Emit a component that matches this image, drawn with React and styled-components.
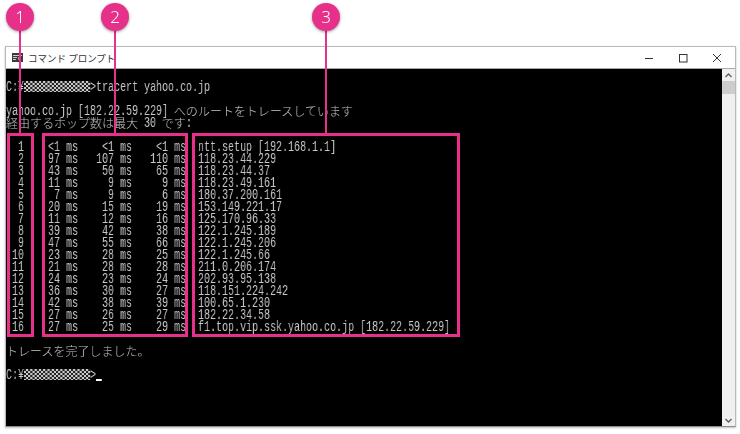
import React from "react";
import styled, { createGlobalStyle } from "styled-components";

const Global = createGlobalStyle`
  html, body { margin: 0; padding: 0; background: #fff; }
  #root { width: 740px; height: 434px; overflow: hidden; }
`;

const Page = styled.div`
  position: relative;
  width: 740px;
  height: 434px;
  padding: 46px 4px 6px 5px;
  box-sizing: border-box;
  background: #fff;
  filter: blur(0.35px);
`;

const Window = styled.div`
  display: flex;
  flex-direction: column;
  height: 381px;
  box-sizing: border-box;
  border: 1px solid #b9b9b9;
  border-bottom: 1px solid #8c8c8c;
  background: #fff;
  box-shadow: 0 1px 2px rgba(0, 0, 0, 0.25);
`;

const TitleBar = styled.div`
  display: flex;
  align-items: center;
  height: 22px;
  flex: none;
  box-sizing: border-box;
  padding-left: 6px;
  border-bottom: 1px solid #a8a8a8;
`;

const TitleText = styled.span`
  margin-left: 5px;
  font: 9.5px/22px "Noto Sans CJK JP", "Noto Sans", sans-serif;
  color: #333;
`;

const Controls = styled.div`
  display: flex;
  margin-left: auto;
  margin-right: 1px;
`;

const ControlButton = styled.span`
  display: flex;
  width: 34px;
  height: 21px;
  align-items: center;
  justify-content: center;
`;

const Body = styled.div`
  flex: 1;
  display: flex;
  min-height: 0;
`;

const Screen = styled.div`
  flex: 1;
  background: #000;
  padding-top: 12px;
  overflow: hidden;
`;

const ConsoleText = styled.div`
  width: 140%;
  transform: scaleX(0.7143);
  transform-origin: left top;
  will-change: transform;
  color: #c8c8c8;
  font: 14px/12px "Liberation Mono", monospace;
`;

const Line = styled.div`
  height: 12px;
  white-space: pre;
`;

const Cjk = styled.span`
  display: inline-block;
  width: ${(p) => p.$chars * 16.8}px;
  height: 12px;
  vertical-align: top;
  transform: scaleX(1.4);
  transform-origin: left top;
  font: 300 12px/12px "Noto Sans CJK JP", sans-serif;
`;

const Mask = styled.span`
  display: inline-block;
  width: 11ch;
  height: 11px;
  vertical-align: top;
  background-color: #000;
  background-image: conic-gradient(#c8c8c8 25%, #222 0 50%, #c8c8c8 0 75%, #222 0);
  background-size: 6px 4px;
`;

const Cursor = styled.span`
  display: inline-block;
  width: 1ch;
  height: 2px;
  background: #fff;
  vertical-align: -2px;
`;

const Scrollbar = styled.div`
  width: 13px;
  flex: none;
  display: flex;
  flex-direction: column;
  align-items: stretch;
  background: #f0f0f0;
`;

const ScrollArrow = styled.div`
  height: 12px;
  display: flex;
  align-items: center;
  justify-content: center;
  flex: none;
`;

const Thumb = styled.div`
  height: 13px;
  background: #cdcdcd;
  flex: none;
`;

const Track = styled.div`
  flex: 1;
`;

const Frame = styled.div`
  position: absolute;
  top: ${(p) => p.$top}px;
  left: ${(p) => p.$left}px;
  width: ${(p) => p.$width}px;
  height: ${(p) => p.$height}px;
  box-sizing: border-box;
  border: 3px solid #e6308a;
`;

const Leader = styled.div`
  position: absolute;
  top: 20px;
  left: ${(p) => p.$x - 1}px;
  width: 2px;
  height: 114px;
  background: #e6308a;
`;

const Badge = styled.div`
  position: absolute;
  top: 3px;
  left: ${(p) => p.$x - 14}px;
  width: 28px;
  height: 28px;
  border-radius: 50%;
  background: #e6308a;
  color: #fff;
  box-shadow: 0 1px 3px rgba(0, 0, 0, 0.4);
  font: 300 17px/27px "Noto Sans", sans-serif;
  text-align: center;
`;

const hops = [
  ["<1", "<1", "<1", "ntt.setup [192.168.1.1]"],
  [97, 107, 110, "118.23.44.229"],
  [43, 50, 65, "118.23.44.37"],
  [11, 9, 9, "118.23.49.161"],
  [7, 9, 6, "180.37.200.161"],
  [20, 15, 19, "153.149.221.17"],
  [11, 12, 16, "125.170.96.33"],
  [39, 42, 38, "122.1.245.189"],
  [47, 55, 66, "122.1.245.206"],
  [23, 28, 25, "122.1.245.66"],
  [21, 28, 28, "211.0.206.174"],
  [24, 23, 24, "202.93.95.138"],
  [36, 30, 27, "118.151.224.242"],
  [42, 38, 39, "100.65.1.230"],
  [27, 26, 27, "182.22.34.58"],
  [27, 25, 29, "f1.top.vip.ssk.yahoo.co.jp [182.22.59.229]"],
];

const pad = (v, n) => String(v).padStart(n, " ");
const hopLine = ([a, b, c, host], i) =>
  `${pad(i + 1, 3)}${pad(a, 6)} ms${pad(b, 6)} ms${pad(c, 6)} ms  ${host}`;

const mixed = (text) =>
  text.split(/([\u3000-\u30ff\u4e00-\u9fff]+)/).map((part, i) =>
    i % 2 ? (
      <Cjk key={i} $chars={part.length}>
        {part}
      </Cjk>
    ) : (
      part
    )
  );

const frames = [
  { left: 7, top: 133, width: 27, height: 204 },
  { left: 42, top: 133, width: 146, height: 204 },
  { left: 192, top: 133, width: 268, height: 204 },
];

const callouts = [
  { x: 20, n: 1 },
  { x: 115, n: 2 },
  { x: 326, n: 3 },
];

export default function App() {
  return (
    <Page>
      <Global />
      <Window>
        <TitleBar>
          <svg width="11" height="9" viewBox="0 0 11 9">
            <rect width="11" height="9" fill="#3a3a3a" />
            <rect x="1" y="2" width="9" height="1" fill="#ccc" />
            <rect x="1" y="4" width="4" height="1" fill="#ccc" />
            <rect x="6" y="4" width="3" height="3" fill="#999" />
            <rect x="1" y="6" width="3" height="1" fill="#ccc" />
          </svg>
          <TitleText>コマンド プロンプト</TitleText>
          <Controls>
            <ControlButton>
              <svg width="10" height="10" viewBox="0 0 10 10">
                <path d="M1 5.5H9" stroke="#333" strokeWidth="1" fill="none" />
              </svg>
            </ControlButton>
            <ControlButton>
              <svg width="10" height="10" viewBox="0 0 10 10">
                <rect x="1.5" y="1.5" width="7.5" height="7.5" stroke="#333" strokeWidth="1" fill="none" />
              </svg>
            </ControlButton>
            <ControlButton>
              <svg width="10" height="10" viewBox="0 0 10 10">
                <path d="M1 1L9 9M9 1L1 9" stroke="#333" strokeWidth="1" fill="none" />
              </svg>
            </ControlButton>
          </Controls>
        </TitleBar>
        <Body>
          <Screen>
            <ConsoleText>
              <Line>
                C:¥<Mask />&gt;tracert yahoo.co.jp
              </Line>
              <Line> </Line>
              <Line>{mixed("yahoo.co.jp [182.22.59.229] へのルートをトレースしています")}</Line>
              <Line>{mixed("経由するホップ数は最大 30 です:")}</Line>
              <Line> </Line>
              {hops.map((h, i) => (
                <Line key={i}>{hopLine(h, i)}</Line>
              ))}
              <Line> </Line>
              <Line>{mixed("トレースを完了しました。")}</Line>
              <Line> </Line>
              <Line>
                C:¥<Mask />&gt;<Cursor />
              </Line>
            </ConsoleText>
          </Screen>
          <Scrollbar>
            <ScrollArrow>
              <svg width="7" height="5" viewBox="0 0 7 5">
                <path d="M0.5 4L3.5 1L6.5 4" stroke="#606060" strokeWidth="1.4" fill="none" />
              </svg>
            </ScrollArrow>
            <Thumb />
            <Track />
            <ScrollArrow>
              <svg width="7" height="5" viewBox="0 0 7 5">
                <path d="M0.5 1L3.5 4L6.5 1" stroke="#606060" strokeWidth="1.4" fill="none" />
              </svg>
            </ScrollArrow>
          </Scrollbar>
        </Body>
      </Window>
      {frames.map((f, i) => (
        <Frame key={i} $left={f.left} $top={f.top} $width={f.width} $height={f.height} />
      ))}
      {callouts.map((c) => (
        <React.Fragment key={c.n}>
          <Leader $x={c.x} />
          <Badge $x={c.x}>{c.n}</Badge>
        </React.Fragment>
      ))}
    </Page>
  );
}
